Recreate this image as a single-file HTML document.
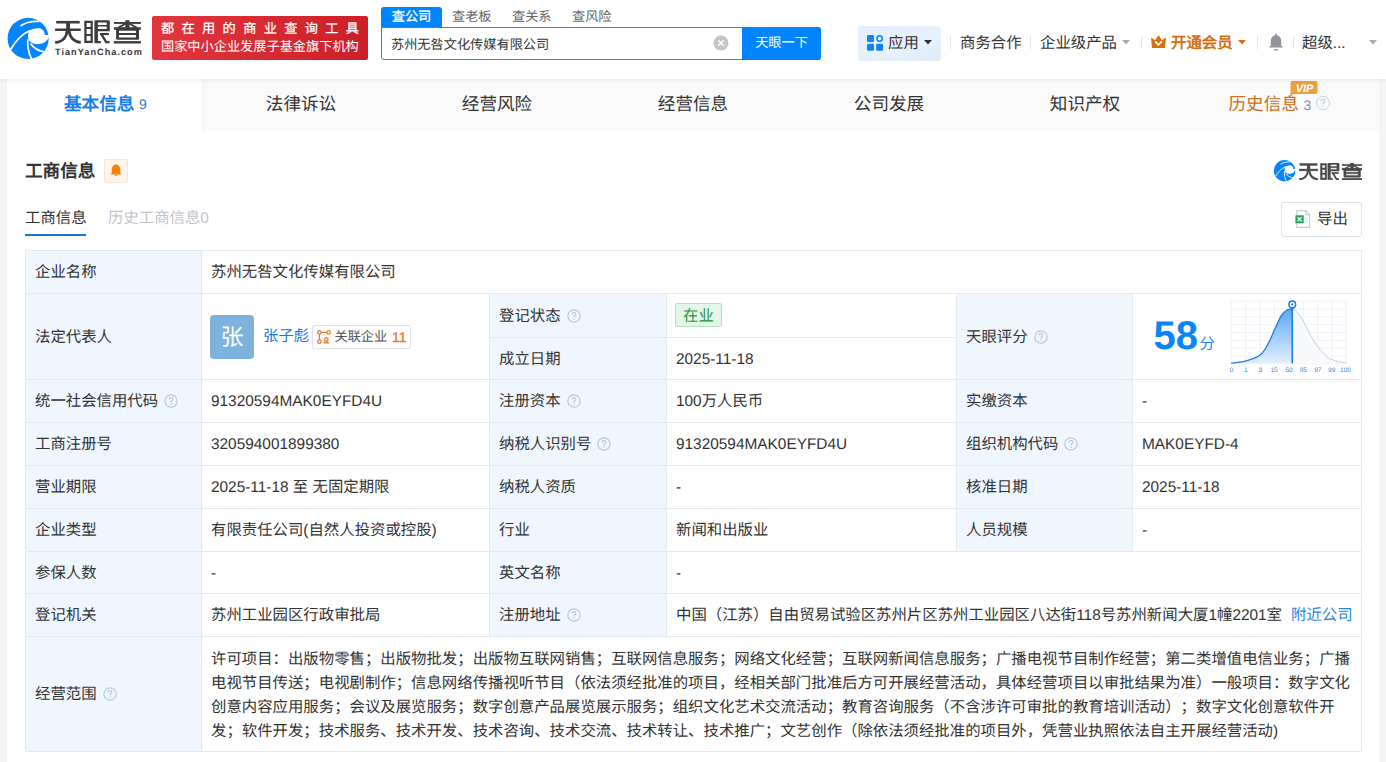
<!DOCTYPE html>
<html lang="zh-CN"><head><meta charset="utf-8">
<style>
*{box-sizing:border-box;margin:0;padding:0}
html,body{width:1386px;height:762px;overflow:hidden}
body{background:#f5f5f5;font-family:"Liberation Sans",sans-serif;color:#333;position:relative;text-rendering:geometricPrecision;text-spacing-trim:space-all}
.abs{position:absolute}
.sep{top:36px;width:1px;height:13px;background:#e3e3e3}
#hdr{position:absolute;left:0;top:0;width:1386px;height:79px;background:#fff;box-shadow:0 1px 5px rgba(0,0,0,.08);z-index:2}
#card{position:absolute;left:7px;top:79px;width:1373px;height:700px;background:#fff;box-shadow:0 0 1px rgba(0,0,0,.12)}
#tabs{position:absolute;left:0;top:0;width:1373px;height:52px;background:#fafafa}
.tab{position:absolute;top:0;height:52px;line-height:50px;width:196px;text-align:center;font-size:17.6px;color:#333}
.tab.on{background:#fff;color:#0084ff;font-weight:bold;width:195px;box-shadow:1px 0 2px rgba(0,0,0,.05)}
table{position:absolute;left:18px;top:171px;border-collapse:collapse;table-layout:fixed;width:1336px}
td{border:1px solid #e3e9f0;font-size:15.4px;color:#333;padding:2px 9px 0;height:43px;vertical-align:middle;line-height:20px}
td.l{background:#f0f6fd}
.r42 td{height:42px}
.r44 td{height:44px}
.q{display:inline-block;vertical-align:-2px;margin-left:6px}
</style></head>
<body>
<div id="hdr">
  <!-- logo -->
  <svg class="abs" style="left:4px;top:14px" width="50" height="48" viewBox="0 0 794 762">
    <circle cx="383" cy="387" r="326" fill="#0584fc"/>
    <path d="M392 272 C440 235 520 215 580 232 C620 245 645 285 648 332 L760 332 L760 372 L712 368 C690 430 640 465 560 478 C500 482 455 470 425 450 C395 425 380 390 382 340 Z" fill="#fff"/>
    <path d="M262 190 C330 140 430 112 560 118" stroke="#fff" stroke-width="27" fill="none"/>
    <path d="M108 560 C170 450 260 330 412 262" stroke="#fff" stroke-width="27" fill="none"/>
    <path d="M378 400 C370 500 390 620 440 720" stroke="#fff" stroke-width="27" fill="none"/>
    <path d="M420 470 C470 540 540 590 640 600" stroke="#fff" stroke-width="27" fill="none"/>
  </svg>
  <svg class="abs" style="left:50px;top:16px" width="96" height="32" viewBox="50 16 96 32" fill="#3f3b3a">
    <rect x="56.2" y="20.9" width="23.5" height="2.6"/>
    <rect x="66.2" y="23" width="3.8" height="6"/>
    <rect x="55.1" y="28.5" width="25.6" height="2.5"/>
    <path d="M67.3 30.5 C66.8 36.5 63 42.2 55.2 42.4" stroke="#3f3b3a" stroke-width="2.9" fill="none"/>
    <path d="M68.9 30.5 C69.8 36.5 73.5 42.2 80.8 42.4" stroke="#3f3b3a" stroke-width="2.9" fill="none"/>
    <path d="M84.3 20.8 H92.8 V43 H84.3 Z M86.6 23 V27 H90.6 V23 Z M86.6 29.1 V34 H90.6 V29.1 Z M86.6 36.1 V40.8 H90.6 V36.1 Z" fill-rule="evenodd"/>
    <path d="M94.4 21.4 Q94.4 20.2 95.6 20.2 H108.4 Q109.8 20.2 109.8 21.6 V31.2 H97.9 V41.1 H100.8 V43.3 H95.6 Q94.4 43.3 94.4 42.1 Z M97.9 22.4 V25 H106.7 V22.4 Z M97.9 26.6 V29 H106.7 V26.6 Z" fill-rule="evenodd"/>
    <rect x="99.9" y="33" width="9" height="2"/>
    <path d="M101.3 34.2 L106.2 42.2 H109.6" stroke="#3f3b3a" stroke-width="2.3" fill="none"/>
    <rect x="113.9" y="22" width="27" height="1.9"/>
    <rect x="125.4" y="20.2" width="4.1" height="7.7"/>
    <path d="M125.8 23.5 L118.3 27.7 M129.1 23.5 L136.6 27.7" stroke="#3f3b3a" stroke-width="1.9"/>
    <rect x="113.9" y="27.2" width="27" height="2.6"/>
    <path d="M116.1 28.7 H139 V38.5 Q139 39.7 137.8 39.7 H117.3 Q116.1 39.7 116.1 38.5 Z M119 30.7 V32.9 H135.9 V30.7 Z M119 35.1 V37.5 H135.9 V35.1 Z" fill-rule="evenodd"/>
    <rect x="113.9" y="41.1" width="27" height="2.4"/>
  </svg>
  <div class="abs" style="left:55px;top:47px;font-size:9.2px;font-weight:bold;color:#3f3b3a;letter-spacing:1px;line-height:10px">TianYanCha.com</div>
  <!-- red badge -->
  <div class="abs" style="left:152px;top:16px;width:216px;height:44px;border-radius:2px;background:linear-gradient(90deg,#e2363e,#cc1f27)"></div>
  <div class="abs" style="left:161px;top:20px;width:210px;font-size:13.2px;color:#fff;line-height:18px;letter-spacing:7.35px;-webkit-text-stroke:0.25px #fff">都在用的商业查询工具</div>
  <div class="abs" style="left:161px;top:38px;width:200px;font-size:13.2px;color:#fff;line-height:18px">国家中小企业发展子基金旗下机构</div>
  <!-- search -->
  <div class="abs" style="left:381px;top:7px;width:61px;height:21px;background:#0084ff;border-radius:3px 3px 0 0;color:#fff;font-size:13.2px;line-height:20px;text-align:center;-webkit-text-stroke:0.3px #fff">查公司</div>
  <div class="abs" style="left:452px;top:7px;font-size:13.2px;line-height:20px;color:#666">查老板</div>
  <div class="abs" style="left:512px;top:7px;font-size:13.2px;line-height:20px;color:#666">查关系</div>
  <div class="abs" style="left:572px;top:7px;font-size:13.2px;line-height:20px;color:#666">查风险</div>
  <div class="abs" style="left:381px;top:27px;width:440px;height:33px;border:1px solid #2a86e2;border-radius:0 3px 3px 3px;background:#fff"></div>
  <div class="abs" style="left:391px;top:35px;font-size:13.2px;line-height:20px;color:#333">苏州无咎文化传媒有限公司</div>
  <svg class="abs" style="left:713px;top:35px" width="16" height="16" viewBox="0 0 16 16"><circle cx="8" cy="8" r="7.5" fill="#c4c4c9"/><path d="M5.2 5.2L10.8 10.8M10.8 5.2L5.2 10.8" stroke="#fff" stroke-width="1.4"/></svg>
  <div class="abs" style="left:742px;top:27px;width:79px;height:33px;background:#0084ff;border-radius:0 3px 3px 0;color:#fff;font-size:13.2px;line-height:32px;text-align:center">天眼一下</div>
  <!-- right nav -->
  <div class="abs" style="left:858px;top:26px;width:83px;height:35px;background:linear-gradient(160deg,#e3effc 0%,#e6f1fd 60%,#dfeaf8 100%);border-radius:3px"></div>
  <svg class="abs" style="left:867px;top:35px" width="17" height="16" viewBox="0 0 17 16">
    <rect x="0" y="0" width="7" height="7" rx="1.3" fill="#1283f2"/>
    <circle cx="12.6" cy="3.5" r="2.7" fill="none" stroke="#1283f2" stroke-width="1.6"/>
    <rect x="0" y="8.8" width="7" height="7" rx="1.3" fill="#1283f2"/>
    <rect x="9.1" y="8.8" width="7" height="7" rx="1.3" fill="#1283f2"/>
  </svg>
  <div class="abs" style="left:888px;top:34px;font-size:15.4px;line-height:20px;color:#333">应用</div>
  <svg class="abs" style="left:924px;top:40px" width="8" height="5"><path d="M0 0H8L4 4.5Z" fill="#333"/></svg>
  <div class="abs sep" style="left:950px"></div>
  <div class="abs" style="left:960px;top:34px;font-size:15.4px;line-height:20px;color:#333">商务合作</div>
  <div class="abs sep" style="left:1030px"></div>
  <div class="abs" style="left:1040px;top:34px;font-size:15.4px;line-height:20px;color:#333">企业级产品</div>
  <svg class="abs" style="left:1122px;top:40px" width="8" height="5"><path d="M0 0H8L4 4.5Z" fill="#aaa"/></svg>
  <div class="abs sep" style="left:1141px"></div>
  <svg class="abs" style="left:1151px;top:35px" width="15" height="13" viewBox="0 0 15 13">
    <path d="M0 2.5 L4.2 5.2 L7.5 0 L10.8 5.2 L15 2.5 L14 13 H1 Z" fill="#d4700f"/>
    <path d="M4.2 6.4 L7.5 10 L10.8 6.4" stroke="#fff" stroke-width="1.8" fill="none"/>
  </svg>
  <div class="abs" style="left:1171px;top:34px;font-size:15.4px;line-height:20px;color:#d4700f;font-weight:bold">开通会员</div>
  <svg class="abs" style="left:1238px;top:40px" width="8" height="5"><path d="M0 0H8L4 4.5Z" fill="#d4700f"/></svg>
  <div class="abs sep" style="left:1257px"></div>
  <svg class="abs" style="left:1268px;top:33px" width="16" height="18" viewBox="0 0 16 18">
    <path d="M7 1.2 Q8 0 9 1.2 L9 2.2 Q13.2 3.2 13.2 8 L13.2 12.4 L15.2 14.6 H0.8 L2.8 12.4 L2.8 8 Q2.8 3.2 7 2.2 Z" fill="#93969b"/>
    <rect x="6" y="16" width="4" height="1.6" rx="0.8" fill="#93969b"/>
  </svg>
  <div class="abs sep" style="left:1293px"></div>
  <div class="abs" style="left:1302px;top:34px;font-size:15.4px;line-height:20px;color:#333">超级...</div>
  <svg class="abs" style="left:1369px;top:40px" width="8" height="5"><path d="M0 0H8L4 4.5Z" fill="#aaa"/></svg>
</div>

<div id="card">
  <div id="tabs">
    <div class="tab on" style="left:0"></div>
    <div class="abs" style="left:57px;top:14px;font-size:17.6px;line-height:22px;color:#1a7fe8;font-weight:bold">基本信息</div>
    <div class="abs" style="left:132px;top:14px;font-size:14px;line-height:22px;color:#2a72c9">9</div>
    <div class="tab" style="left:196px">法律诉讼</div>
    <div class="tab" style="left:392px">经营风险</div>
    <div class="tab" style="left:588px">经营信息</div>
    <div class="tab" style="left:784px">公司发展</div>
    <div class="tab" style="left:980px">知识产权</div>
    <div class="abs" style="left:1221.5px;top:14px;font-size:17.6px;line-height:22px;color:#c8701f">历史信息</div>
    <div class="abs" style="left:1296.5px;top:15px;font-size:14px;line-height:22px;color:#8d929b">3</div>
    <div class="abs" style="left:1309px;top:17px;width:14px;height:14px;border:1.3px solid #c8d2de;border-radius:50%"></div>
    <svg class="abs" style="left:1309px;top:17px" width="14" height="14" viewBox="0 0 14 14"><path d="M5 5.3 Q5 3.3 7 3.3 Q9 3.3 9 5.1 Q9 6.3 7.6 6.9 Q7 7.2 7 8.4" fill="none" stroke="#c0cbd8" stroke-width="1.1"/><circle cx="7" cy="10.3" r="0.7" fill="#c0cbd8"/></svg>
    <svg class="abs" style="left:1283px;top:2px" width="28" height="16" viewBox="0 0 28 16"><path d="M2 0 H25.5 Q27.5 0 27.5 2 V11 Q27.5 13 25.5 13 H4 L0.5 15.5 L0.5 2 Q0.5 0 2 0 Z" fill="#eaa23f"/><text x="14.5" y="10.8" font-family="Liberation Sans" font-weight="bold" font-style="italic" font-size="11" fill="#fff" text-anchor="middle">VIP</text></svg>
  </div>
  <div class="abs" style="left:18px;top:81px;font-size:17.6px;font-weight:bold;line-height:22px;color:#333">工商信息</div>
  <div class="abs" style="left:97px;top:80px;width:24px;height:24px;background:#fff5ea;border:1px solid #fbe5d0;border-radius:2px"></div>
  <svg class="abs" style="left:103px;top:85px" width="12" height="13" viewBox="0 0 12 13">
    <path d="M5.4 0.6 Q6 0 6.6 0.6 Q10.3 1.6 10.3 6 V9.3 L11.6 10.6 H0.4 L1.7 9.3 V6 Q1.7 1.6 5.4 0.6 Z" fill="#ff7f00"/>
    <path d="M4.4 10.8 Q6 13.6 7.6 10.8 Z" fill="#ff7f00"/>
  </svg>
  <svg class="abs" style="left:1265px;top:79px" width="26.1" height="25" viewBox="0 0 794 762">
    <circle cx="383" cy="387" r="326" fill="#0584fc"/>
    <path d="M392 272 C440 235 520 215 580 232 C620 245 645 285 648 332 L760 332 L760 372 L712 368 C690 430 640 465 560 478 C500 482 455 470 425 450 C395 425 380 390 382 340 Z" fill="#fff"/>
    <path d="M262 190 C330 140 430 112 560 118" stroke="#fff" stroke-width="27" fill="none"/>
    <path d="M108 560 C170 450 260 330 412 262" stroke="#fff" stroke-width="27" fill="none"/>
    <path d="M378 400 C370 500 390 620 440 720" stroke="#fff" stroke-width="27" fill="none"/>
    <path d="M420 470 C470 540 540 590 640 600" stroke="#fff" stroke-width="27" fill="none"/>
  </svg>
  <svg class="abs" style="left:1291.7px;top:84px" width="63" height="17" viewBox="55 20.2 86 23.3" preserveAspectRatio="none" fill="#4a4848" stroke="#4a4848" stroke-width="0.6">
    <rect x="56.2" y="20.9" width="23.5" height="2.6"/>
    <rect x="66.2" y="23" width="3.8" height="6"/>
    <rect x="55.1" y="28.5" width="25.6" height="2.5"/>
    <path d="M67.3 30.5 C66.8 36.5 63 42.2 55.2 42.4" stroke="#4a4848" stroke-width="2.9" fill="none"/>
    <path d="M68.9 30.5 C69.8 36.5 73.5 42.2 80.8 42.4" stroke="#4a4848" stroke-width="2.9" fill="none"/>
    <path d="M84.3 20.8 H92.8 V43 H84.3 Z M86.6 23 V27 H90.6 V23 Z M86.6 29.1 V34 H90.6 V29.1 Z M86.6 36.1 V40.8 H90.6 V36.1 Z" fill-rule="evenodd"/>
    <path d="M94.4 21.4 Q94.4 20.2 95.6 20.2 H108.4 Q109.8 20.2 109.8 21.6 V31.2 H97.9 V41.1 H100.8 V43.3 H95.6 Q94.4 43.3 94.4 42.1 Z M97.9 22.4 V25 H106.7 V22.4 Z M97.9 26.6 V29 H106.7 V26.6 Z" fill-rule="evenodd"/>
    <rect x="99.9" y="33" width="9" height="2"/>
    <path d="M101.3 34.2 L106.2 42.2 H109.6" stroke="#4a4848" stroke-width="2.3" fill="none"/>
    <rect x="113.9" y="22" width="27" height="1.9"/>
    <rect x="125.4" y="20.2" width="4.1" height="7.7"/>
    <path d="M125.8 23.5 L118.3 27.7 M129.1 23.5 L136.6 27.7" stroke="#4a4848" stroke-width="1.9"/>
    <rect x="113.9" y="27.2" width="27" height="2.6"/>
    <path d="M116.1 28.7 H139 V38.5 Q139 39.7 137.8 39.7 H117.3 Q116.1 39.7 116.1 38.5 Z M119 30.7 V32.9 H135.9 V30.7 Z M119 35.1 V37.5 H135.9 V35.1 Z" fill-rule="evenodd"/>
    <rect x="113.9" y="41.1" width="27" height="2.4"/>
  </svg>
  <div class="abs" style="left:18px;top:130px;font-size:15.4px;line-height:20px;color:#333">工商信息</div>
  <div class="abs" style="left:18px;top:155px;width:61px;height:2px;background:#1b72d0"></div>
  <div class="abs" style="left:101px;top:130px;font-size:15.4px;line-height:20px;color:#bfc4cc">历史工商信息0</div>
  <div class="abs" style="left:1274px;top:123px;width:81px;height:35px;border:1px solid #dde1e8;border-radius:3px"></div>
  <svg class="abs" style="left:1288px;top:131px" width="16" height="18" viewBox="0 0 16 18">
    <path d="M1.8 0.6 H10.8 L14.6 4.4 V17.4 H1.8 Z" fill="#fff" stroke="#c9ccd2" stroke-width="1.1"/>
    <path d="M10.6 0.8 V4.6 H14.4" fill="none" stroke="#c9ccd2" stroke-width="1.1"/>
    <rect x="0.4" y="5.2" width="8.3" height="8.1" rx="0.6" fill="#1fa463"/>
    <path d="M2.5 7.2 L6.6 11.3 M6.6 7.2 L2.5 11.3" stroke="#e8fff2" stroke-width="1.3"/>
    <path d="M10 8.2 H12.8 M10 10.2 H12.8 M10 12.2 H12.8" stroke="#d6d8dc" stroke-width="0.9"/>
  </svg>
  <div class="abs" style="left:1310px;top:131px;font-size:15.4px;line-height:20px;color:#333">导出</div>

  <table>
    <colgroup><col style="width:176px"><col style="width:288px"><col style="width:177px"><col style="width:290px"><col style="width:176px"><col style="width:229px"></colgroup>
    <tr><td class="l">企业名称</td><td colspan="5">苏州无咎文化传媒有限公司</td></tr>
    <tr class="r44"><td class="l" rowspan="2">法定代表人</td><td rowspan="2"></td><td class="l">登记状态<svg class="q" width="14" height="14" viewBox="0 0 14 14"><circle cx="7" cy="7" r="6.2" fill="none" stroke="#b6c9dd" stroke-width="1.2"/><path d="M5.1 5.4 Q5.1 3.6 7 3.6 Q8.9 3.6 8.9 5.2 Q8.9 6.2 7.7 6.8 Q7 7.2 7 8.5" fill="none" stroke="#b6c9dd" stroke-width="1.1"/><circle cx="7" cy="10.2" r="0.7" fill="#b6c9dd"/></svg></td><td></td><td class="l" rowspan="2">天眼评分<svg class="q" width="14" height="14" viewBox="0 0 14 14"><circle cx="7" cy="7" r="6.2" fill="none" stroke="#b6c9dd" stroke-width="1.2"/><path d="M5.1 5.4 Q5.1 3.6 7 3.6 Q8.9 3.6 8.9 5.2 Q8.9 6.2 7.7 6.8 Q7 7.2 7 8.5" fill="none" stroke="#b6c9dd" stroke-width="1.1"/><circle cx="7" cy="10.2" r="0.7" fill="#b6c9dd"/></svg></td><td rowspan="2"></td></tr>
    <tr class="r42"><td class="l">成立日期</td><td>2025-11-18</td></tr>
    <tr><td class="l">统一社会信用代码<svg class="q" width="14" height="14" viewBox="0 0 14 14"><circle cx="7" cy="7" r="6.2" fill="none" stroke="#b6c9dd" stroke-width="1.2"/><path d="M5.1 5.4 Q5.1 3.6 7 3.6 Q8.9 3.6 8.9 5.2 Q8.9 6.2 7.7 6.8 Q7 7.2 7 8.5" fill="none" stroke="#b6c9dd" stroke-width="1.1"/><circle cx="7" cy="10.2" r="0.7" fill="#b6c9dd"/></svg></td><td>91320594MAK0EYFD4U</td><td class="l">注册资本<svg class="q" width="14" height="14" viewBox="0 0 14 14"><circle cx="7" cy="7" r="6.2" fill="none" stroke="#b6c9dd" stroke-width="1.2"/><path d="M5.1 5.4 Q5.1 3.6 7 3.6 Q8.9 3.6 8.9 5.2 Q8.9 6.2 7.7 6.8 Q7 7.2 7 8.5" fill="none" stroke="#b6c9dd" stroke-width="1.1"/><circle cx="7" cy="10.2" r="0.7" fill="#b6c9dd"/></svg></td><td>100万人民币</td><td class="l">实缴资本</td><td>-</td></tr>
    <tr><td class="l">工商注册号</td><td>320594001899380</td><td class="l">纳税人识别号<svg class="q" width="14" height="14" viewBox="0 0 14 14"><circle cx="7" cy="7" r="6.2" fill="none" stroke="#b6c9dd" stroke-width="1.2"/><path d="M5.1 5.4 Q5.1 3.6 7 3.6 Q8.9 3.6 8.9 5.2 Q8.9 6.2 7.7 6.8 Q7 7.2 7 8.5" fill="none" stroke="#b6c9dd" stroke-width="1.1"/><circle cx="7" cy="10.2" r="0.7" fill="#b6c9dd"/></svg></td><td>91320594MAK0EYFD4U</td><td class="l">组织机构代码<svg class="q" width="14" height="14" viewBox="0 0 14 14"><circle cx="7" cy="7" r="6.2" fill="none" stroke="#b6c9dd" stroke-width="1.2"/><path d="M5.1 5.4 Q5.1 3.6 7 3.6 Q8.9 3.6 8.9 5.2 Q8.9 6.2 7.7 6.8 Q7 7.2 7 8.5" fill="none" stroke="#b6c9dd" stroke-width="1.1"/><circle cx="7" cy="10.2" r="0.7" fill="#b6c9dd"/></svg></td><td>MAK0EYFD-4</td></tr>
    <tr><td class="l">营业期限</td><td>2025-11-18 至 无固定期限</td><td class="l">纳税人资质</td><td>-</td><td class="l">核准日期</td><td>2025-11-18</td></tr>
    <tr><td class="l">企业类型</td><td>有限责任公司(自然人投资或控股)</td><td class="l">行业</td><td>新闻和出版业</td><td class="l">人员规模</td><td>-</td></tr>
    <tr class="r42"><td class="l">参保人数</td><td>-</td><td class="l">英文名称</td><td colspan="3">-</td></tr>
    <tr><td class="l">登记机关</td><td>苏州工业园区行政审批局</td><td class="l">注册地址<svg class="q" width="14" height="14" viewBox="0 0 14 14"><circle cx="7" cy="7" r="6.2" fill="none" stroke="#b6c9dd" stroke-width="1.2"/><path d="M5.1 5.4 Q5.1 3.6 7 3.6 Q8.9 3.6 8.9 5.2 Q8.9 6.2 7.7 6.8 Q7 7.2 7 8.5" fill="none" stroke="#b6c9dd" stroke-width="1.1"/><circle cx="7" cy="10.2" r="0.7" fill="#b6c9dd"/></svg></td><td colspan="3" style="white-space:nowrap">中国（江苏）自由贸易试验区苏州片区苏州工业园区八达街118号苏州新闻大厦1幢2201室<span style="color:#2a86e0;margin-left:9px">附近公司</span></td></tr>
    <tr><td class="l" style="height:115px">经营范围<svg class="q" width="14" height="14" viewBox="0 0 14 14"><circle cx="7" cy="7" r="6.2" fill="none" stroke="#b6c9dd" stroke-width="1.2"/><path d="M5.1 5.4 Q5.1 3.6 7 3.6 Q8.9 3.6 8.9 5.2 Q8.9 6.2 7.7 6.8 Q7 7.2 7 8.5" fill="none" stroke="#b6c9dd" stroke-width="1.1"/><circle cx="7" cy="10.2" r="0.7" fill="#b6c9dd"/></svg></td><td colspan="5" style="line-height:24px;padding-top:10px;padding-bottom:6px">许可项目：出版物零售；出版物批发；出版物互联网销售；互联网信息服务；网络文化经营；互联网新闻信息服务；广播电视节目制作经营；第二类增值电信业务；广播电视节目传送；电视剧制作；信息网络传播视听节目（依法须经批准的项目，经相关部门批准后方可开展经营活动，具体经营项目以审批结果为准）一般项目：数字文化创意内容应用服务；会议及展览服务；数字创意产品展览展示服务；组织文化艺术交流活动；教育咨询服务（不含涉许可审批的教育培训活动）；数字文化创意软件开发；软件开发；技术服务、技术开发、技术咨询、技术交流、技术转让、技术推广；文艺创作（除依法须经批准的项目外，凭营业执照依法自主开展经营活动)</td></tr>
  </table>
</div>

<!-- overlays -->
<div class="abs" style="left:210px;top:315px;width:44px;height:44px;background:#7eb1db;border-radius:4px;color:#fff;font-size:23px;line-height:44px;text-align:center">张</div>
<div class="abs" style="left:263px;top:327px;font-size:15.4px;line-height:20px;color:#1a78d6">张子彪</div>
<div class="abs" style="left:312px;top:325px;width:99px;height:24px;border:1px solid #e1e5eb;border-radius:2px;background:#fff"></div>
<svg class="abs" style="left:317px;top:330px" width="14" height="14" viewBox="0 0 14 14">
  <circle cx="2.4" cy="2.4" r="1.7" fill="none" stroke="#e8772e" stroke-width="1.2"/>
  <circle cx="11.6" cy="2.4" r="1.7" fill="none" stroke="#e8772e" stroke-width="1.2"/>
  <circle cx="2.4" cy="11.6" r="1.7" fill="none" stroke="#e8772e" stroke-width="1.2"/>
  <path d="M4.1 2.4 H9.9 M2.4 4.1 V9.9" stroke="#e8772e" stroke-width="1.2"/>
  <path d="M7 9.2 L9.3 7.4 L11.6 9.2 M7.8 9 V12.6 M10.8 9 V12.6 M6.6 13 H12.4 M9.3 10 V13" fill="none" stroke="#e8772e" stroke-width="1.1"/>
</svg>
<div class="abs" style="left:334.5px;top:327px;font-size:13.2px;line-height:20px;color:#555">关联企业</div>
<div class="abs" style="left:392px;top:327px;font-size:14px;line-height:20px;color:#e5772a;-webkit-text-stroke:0.35px #e5772a">11</div>

<div class="abs" style="left:675px;top:303px;width:47px;height:24px;background:#e4f6e9;border:1px solid #b4e1c0;border-radius:2px;color:#24963f;font-size:15.4px;line-height:25px;text-align:center">在业</div>
<div class="abs" style="left:1153.5px;top:314px;font-size:40px;font-weight:bold;line-height:44px;color:#0a84f8">58</div>
<div class="abs" style="left:1199.5px;top:335px;font-size:15.4px;line-height:20px;color:#1f86ea">分</div>
<svg class="abs" style="left:1225px;top:295px" width="130" height="82" viewBox="1225 295 130 82">
  <defs><linearGradient id="gb" x1="0" y1="0" x2="0" y2="1"><stop offset="0" stop-color="#5aa8f7"/><stop offset="1" stop-color="#e2effd"/></linearGradient></defs>
  <path d="M1231.2 301.2 V363.8" stroke="#edf2f7" stroke-width="1"/><path d="M1245.6 301.2 V363.8" stroke="#edf2f7" stroke-width="1"/><path d="M1260.0 301.2 V363.8" stroke="#edf2f7" stroke-width="1"/><path d="M1274.4 301.2 V363.8" stroke="#edf2f7" stroke-width="1"/><path d="M1288.8 301.2 V363.8" stroke="#edf2f7" stroke-width="1"/><path d="M1303.2 301.2 V363.8" stroke="#edf2f7" stroke-width="1"/><path d="M1317.6 301.2 V363.8" stroke="#edf2f7" stroke-width="1"/><path d="M1332.0 301.2 V363.8" stroke="#edf2f7" stroke-width="1"/><path d="M1346.4 301.2 V363.8" stroke="#edf2f7" stroke-width="1"/><path d="M1231.2 301.2 H1346.4" stroke="#edf2f7" stroke-width="1"/><path d="M1231.2 309.0 H1346.4" stroke="#edf2f7" stroke-width="1"/><path d="M1231.2 316.9 H1346.4" stroke="#edf2f7" stroke-width="1"/><path d="M1231.2 324.7 H1346.4" stroke="#edf2f7" stroke-width="1"/><path d="M1231.2 332.5 H1346.4" stroke="#edf2f7" stroke-width="1"/><path d="M1231.2 340.3 H1346.4" stroke="#edf2f7" stroke-width="1"/><path d="M1231.2 348.1 H1346.4" stroke="#edf2f7" stroke-width="1"/><path d="M1231.2 356.0 H1346.4" stroke="#edf2f7" stroke-width="1"/><path d="M1231.2 363.8 H1346.4" stroke="#edf2f7" stroke-width="1"/>
  <path d="M1292.31,308.67 C1293.05,309.20 1295.06,309.95 1296.80,311.86 C1298.53,313.77 1299.95,315.40 1302.70,320.13 C1305.46,324.85 1309.40,334.21 1313.34,340.21 C1317.27,346.22 1322.59,352.72 1326.33,356.16 C1330.07,359.61 1332.44,359.75 1335.78,360.89 C1339.13,362.03 1344.65,362.66 1346.42,363.02 L1346.42,363.3 L1292.31,363.3 Z" fill="#f8f9fb"/>
  <path d="M1231.22,363.25 C1233.72,362.86 1241.31,362.37 1246.23,360.89 C1251.15,359.41 1257.06,357.34 1260.76,354.39 C1264.46,351.44 1266.14,347.30 1268.44,343.17 C1270.74,339.03 1272.42,334.21 1274.58,329.58 C1276.75,324.95 1279.31,318.69 1281.44,315.40 C1283.56,312.11 1285.53,310.97 1287.34,309.85 C1289.16,308.73 1291.48,308.86 1292.31,308.67 L1292.31,363.3 L1231.22,363.3 Z" fill="url(#gb)"/>
  <path d="M1292.31,308.67 C1293.05,309.20 1295.06,309.95 1296.80,311.86 C1298.53,313.77 1299.95,315.40 1302.70,320.13 C1305.46,324.85 1309.40,334.21 1313.34,340.21 C1317.27,346.22 1322.59,352.72 1326.33,356.16 C1330.07,359.61 1332.44,359.75 1335.78,360.89 C1339.13,362.03 1344.65,362.66 1346.42,363.02" fill="none" stroke="#c9ced6" stroke-width="1"/>
  <path d="M1231.22,363.25 C1233.72,362.86 1241.31,362.37 1246.23,360.89 C1251.15,359.41 1257.06,357.34 1260.76,354.39 C1264.46,351.44 1266.14,347.30 1268.44,343.17 C1270.74,339.03 1272.42,334.21 1274.58,329.58 C1276.75,324.95 1279.31,318.69 1281.44,315.40 C1283.56,312.11 1285.53,310.97 1287.34,309.85 C1289.16,308.73 1291.48,308.86 1292.31,308.67" fill="none" stroke="#1d7fe3" stroke-width="1.3"/>
  <path d="M1292.3 308.7 V363.3" stroke="#1d7fe3" stroke-width="1.6"/>
  <path d="M1289.6 306.5 L1292.3 310.2 L1295 306.5 Z" fill="#1d7fe3"/>
  <circle cx="1292.3" cy="304.4" r="3.3" fill="#fff" stroke="#1d7fe3" stroke-width="1.5"/>
  <circle cx="1292.3" cy="304.4" r="1.1" fill="#1d7fe3"/>
  <g font-family="Liberation Sans" font-size="6.5" fill="#3a86d6"><text x="1231.5" y="372.2" text-anchor="middle">0</text><text x="1245.8" y="372.2" text-anchor="middle">1</text><text x="1260.4" y="372.2" text-anchor="middle">3</text><text x="1274.1" y="372.2" text-anchor="middle">15</text><text x="1289.1" y="372.2" text-anchor="middle">50</text><text x="1303.3" y="372.2" text-anchor="middle">85</text><text x="1317.8" y="372.2" text-anchor="middle">97</text><text x="1331.7" y="372.2" text-anchor="middle">99</text><text x="1345.5" y="372.2" text-anchor="middle">100</text></g>
</svg>
</body></html>
